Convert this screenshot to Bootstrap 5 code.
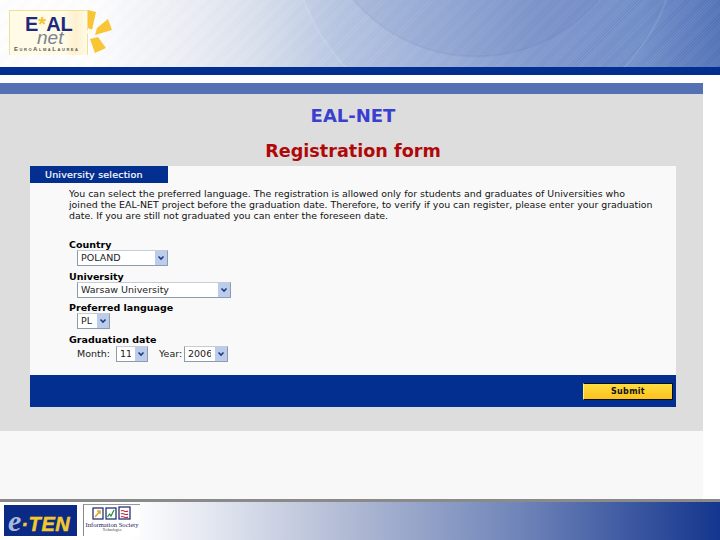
<!DOCTYPE html>
<html lang="en">
<head>
<meta charset="utf-8">
<title>EAL-NET Registration form</title>
<link href="https://cdn.jsdelivr.net/npm/bootstrap@5.3.0/dist/css/bootstrap.min.css" rel="stylesheet">
<style>
html,body{margin:0;background:#fff;width:720px;height:540px;overflow:hidden;font-family:"DejaVu Sans",Verdana,sans-serif;color:#000}
.shell{width:720px;height:540px}
.masthead{height:67px;padding:10px 0 0 9px;background:
 radial-gradient(circle 161px at 476px -104px,rgba(60,85,150,.07) 0,rgba(60,85,150,.07) 159px,rgba(50,70,130,.12) 160px,rgba(40,60,120,0) 162px),
 radial-gradient(circle 194px at 485px -67px,rgba(60,85,150,.02) 0,rgba(60,85,150,.02) 192px,rgba(255,255,255,.12) 193px,rgba(40,60,120,0) 195px),
 repeating-linear-gradient(135deg,rgba(255,255,255,.05) 0 1px,rgba(0,0,0,.02) 1px 2px),
 linear-gradient(90deg,#fff 0,#fff 90px,#eef0f7 180px,#dce3ef 250px,#b9c8e4 340px,#a3b6dd 420px,#819ad0 540px,#7390cb 640px,#5474b9 720px)}
.logobox{width:79px;height:45px;background:linear-gradient(90deg,#fffbe6 0,#fffbe6 70%,#fdf0cf 85%,#fffbe6 100%);border:1px solid #efdf9d;border-bottom:0;position:relative}
.logostar{position:absolute;left:71px;top:-1px}
.logo-e{position:absolute;left:15px;top:6px;font:700 20px/15px "Liberation Sans",sans-serif;color:#1d2a80;white-space:nowrap}
.logo-star{color:#f5c32c}
.logo-net{position:absolute;left:27px;top:21px;font:italic 400 19px/12px "Liberation Sans",sans-serif;color:#7c8291}
.logo-sub{position:absolute;left:4px;bottom:2px;font:700 6px/7px "Liberation Sans",sans-serif;font-variant:small-caps;color:#5a5a50;letter-spacing:1.55px;white-space:nowrap}
.navyband{height:8px;background:#033090}
.whitegap{height:8px;background:#fff}
.stage{width:703px;height:416px;background:#f8f8f8}
.blueband{height:11px;background:#5371b3}
.grayarea{height:337px;background:#dddddd;padding:0 27px 24px 30px}
.heading-one{height:44px;padding-top:10px;margin:0;font-size:18px;line-height:24px;font-weight:700;color:#3a3fcf;text-align:center}
.heading-two{height:28px;margin:0;padding-top:1px;font-size:17.6px;line-height:24px;font-weight:700;color:#b00808;text-align:center}
.panel-wrap{width:646px;height:241px;background:#f9f9f9}
.tabtitle{width:138px;height:17px;background:#033090;color:#fff;font-size:9.5px;font-weight:400;line-height:17px;padding-left:15px;letter-spacing:.2px;-webkit-text-stroke:.2px #fff}
.formbody{height:192px;padding:5px 0 0 39px}
.intro{margin:0 0 18px;font-size:9.42px;line-height:11px;white-space:nowrap;color:#111}
.fieldlabel{display:block;font-size:9.5px;font-weight:700;line-height:11px;margin:0;height:11px}
.fieldgroup{height:31.6px}
.fieldrow{padding-left:8px}
.fakeselect{appearance:none;-webkit-appearance:none;display:block;height:16px;padding:0 16px 0 3px;margin:0;font:9.5px/14px "DejaVu Sans",sans-serif;color:#222;border:1px solid #8d9bb0;border-top-color:#c6ccd6;border-radius:0;background-color:#fff;background-image:url("data:image/svg+xml,%3Csvg xmlns='http://www.w3.org/2000/svg' width='12' height='14'%3E%3Crect width='12' height='14' fill='%23bccdec'/%3E%3Cpath d='M3.5 5.5l2.5 2.5 2.5-2.5' fill='none' stroke='%23203a80' stroke-width='1.6'/%3E%3C/svg%3E");background-repeat:no-repeat;background-position:right 0 center}
.w-country{width:91px}.w-univ{width:154px}.w-lang{width:33px}.w-month{width:32px}.w-year{width:44px}
.datepiece{font-size:9.5px;line-height:16px;color:#222;padding-top:1px}
.w-monthlabel{width:39px}
.w-yearlabel{width:28px;padding-left:3px}
.submitzone{height:32px;background:#033090;padding:8px 3px 0 0}
.submitbtn{width:90px;height:17px;padding:0;border:1px solid #0c0c20;border-left-color:#fff27a;border-radius:0;background:linear-gradient(#ffdc40,#fcc21e);color:#111;font-size:8px;font-weight:700;line-height:14px;letter-spacing:.3px}
.bottomrule{height:3px;background:#8a8a8a}
.pagefoot{height:38px;padding:3px 0 0 4px;gap:6px;background:linear-gradient(90deg,#fff 0,#fff 130px,#e3e7f0 210px,#b4bdd6 340px,#6f84b8 520px,#1d3d92 700px,#153690 720px)}
.etenlogo{width:73px;height:31px;background:#0a2a85;color:#f2c92c;font:italic 700 20px/31px "Liberation Sans",sans-serif;padding-left:4px;white-space:nowrap;letter-spacing:.6px;-webkit-text-stroke:.5px #f2c92c}
.etene{color:#a9b9dc;font:italic 700 30px/31px "Liberation Serif",serif;letter-spacing:0;-webkit-text-stroke:0}
.istlogo{width:57px;height:32px;margin-top:-1px;background:#fff;border-left:1px solid #888;border-top:1px solid #999;text-align:center}
.istsvg{display:block;margin:1px auto 0}
.istname{font:6.6px/6px "Liberation Serif",serif;color:#1b2060;white-space:nowrap;margin-top:1px}
.isttech{font:3.5px/4px "Liberation Serif",serif;color:#333}
</style>
</head>
<body>
<div class="shell d-flex flex-column">
  <header class="masthead">
    <div class="logobox">
      <span class="logo-e">E<span class="logo-star">*</span>AL</span>
      <span class="logo-net">net</span>
      <span class="logo-sub">EuroAlmaLaurea</span>
      <svg class="logostar" width="34" height="46" viewBox="0 0 34 46" aria-hidden="true">
        <path d="M7 0 L15 2 L11 20 L7 18 Z" fill="#f9c534"/>
        <path d="M16 18 L27 9 L31 20 L14 25 Z" fill="#f9c534"/>
        <path d="M9 29 L17 27 L25 38 L14 43 Z" fill="#f9c534"/>
        <circle cx="9" cy="22" r="3" fill="#fffdf0"/>
      </svg>
    </div>
  </header>
  <div class="navyband"></div>
  <div class="whitegap"></div>
  <main class="stage">
    <div class="blueband"></div>
    <div class="grayarea">
      <h1 class="heading-one">EAL-NET</h1>
      <h2 class="heading-two">Registration form</h2>
      <form class="panel-wrap d-flex flex-column">
        <div class="tabtitle">University selection</div>
        <div class="formbody">
          <p class="intro">You can select the preferred language. The registration is allowed only for students and graduates of Universities who<br>joined the EAL-NET project before the graduation date. Therefore, to verify if you can register, please enter your graduation<br>date. If you are still not graduated you can enter the foreseen date.</p>
          <div class="fieldgroup">
            <label class="fieldlabel" for="c1">Country</label>
            <div class="fieldrow"><select id="c1" class="fakeselect w-country"><option>POLAND</option></select></div>
          </div>
          <div class="fieldgroup">
            <label class="fieldlabel" for="c2">University</label>
            <div class="fieldrow"><select id="c2" class="fakeselect w-univ"><option>Warsaw University</option></select></div>
          </div>
          <div class="fieldgroup">
            <label class="fieldlabel" for="c3">Preferred language</label>
            <div class="fieldrow"><select id="c3" class="fakeselect w-lang"><option>PL</option></select></div>
          </div>
          <div class="fieldgroup">
            <span class="fieldlabel">Graduation date</span>
            <div class="fieldrow d-flex align-items-center datepiece">
              <span class="w-monthlabel">Month:</span>
              <select class="fakeselect w-month" aria-label="Month"><option>11</option></select>
              <span class="ms-2 w-yearlabel">Year:</span>
              <select class="fakeselect w-year" aria-label="Year"><option>2006</option></select>
            </div>
          </div>
        </div>
        <div class="submitzone d-flex justify-content-end">
          <button type="button" class="btn submitbtn">Submit</button>
        </div>
      </form>
    </div>
  </main>
  <div class="bottomrule"></div>
  <footer class="pagefoot d-flex">
    <div class="etenlogo"><span class="etene">e</span>&#183;TEN</div>
    <div class="istlogo">
      <svg width="40" height="15" viewBox="0 0 40 15" class="istsvg" aria-hidden="true">
        <rect x="1" y="2" width="10" height="11" fill="#fff" stroke="#16206a" stroke-width="1.2"/>
        <path d="M3 11l5-6M5 5h3v3" fill="none" stroke="#e0a828" stroke-width="1.6"/>
        <rect x="14" y="2" width="10" height="11" fill="#fff" stroke="#16206a" stroke-width="1.2"/>
        <path d="M15.5 11l2-3 1.5 2 3-6" fill="none" stroke="#2a9440" stroke-width="1.3"/>
        <rect x="27" y="1" width="11" height="12" fill="#fff" stroke="#16206a" stroke-width="1.2"/>
        <path d="M29 5c2-2 4 2 7 0M29 8c2-2 4 2 7 0M29 11c2-2 4 2 7 0" fill="none" stroke="#c8283c" stroke-width="1.2"/>
      </svg>
      <div class="istname">Information Society</div>
      <div class="isttech">Technologies</div>
    </div>
  </footer>
</div>
<script src="https://cdn.jsdelivr.net/npm/bootstrap@5.3.0/dist/js/bootstrap.bundle.min.js"></script>
</body>
</html>
